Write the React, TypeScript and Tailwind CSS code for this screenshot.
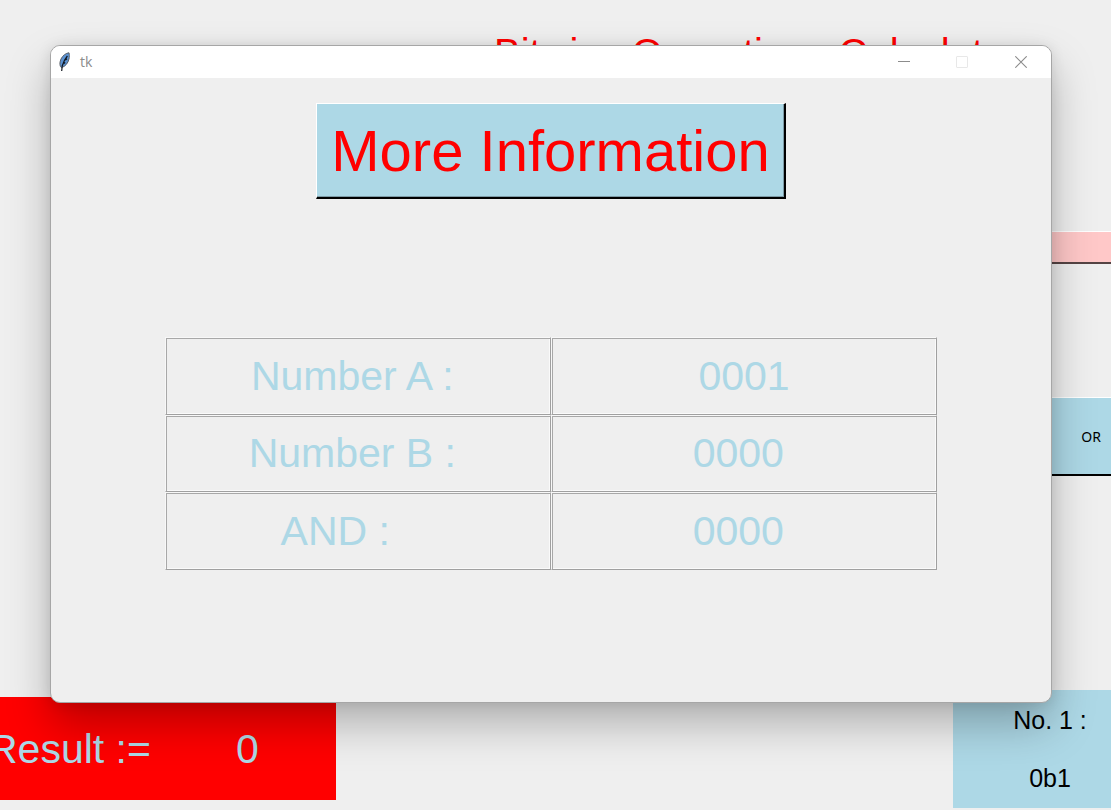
import React from "react";

const rows = [
  { label: "Number A : ", value: "0001" },
  { label: "Number B : ", value: "0000 " },
  { label: "AND :    ", value: "0000 " },
];

const cell =
  "w-1/2 whitespace-pre border border-t-[#f8f8f8] border-l-[#f8f8f8] border-r-[#a0a0a0] border-b-[#a0a0a0] p-0 text-center align-middle text-[41px] leading-[46px] font-normal text-[#add8e6] shadow-[inset_1px_1px_0_#a8a8a8,inset_-1px_-1px_0_#fafafa]";

function FeatherIcon() {
  return (
    <svg width="14" height="20" viewBox="0 0 14 20" aria-hidden="true">
      <path
        d="M11 0.8C8 1 4.6 3.6 3 7 1.8 9.8 1.6 12.4 2.4 14.4L3.4 15.6C7.4 14.6 10 11 11 7 11.4 4.8 11.5 2.6 11 0.8Z"
        fill="#5b92d2"
        stroke="#5a5f66"
        strokeWidth="1"
      />
      <path
        d="M9.4 4C7.2 6.6 5.4 10 4.2 14L3.7 19M9 6.8L7.4 8M7.2 10.6L5.8 11.6"
        fill="none"
        stroke="#10161e"
        strokeWidth="1.2"
      />
    </svg>
  );
}

function CalculatorPage() {
  return (
    <main className="flex min-h-screen flex-col">
      <h1 className="mt-[30px] ml-[494px] text-[40px] leading-[46px] whitespace-nowrap text-[#ff0000]">
        Bitwise Operations Calculator
      </h1>
      <input
        aria-label="Number"
        readOnly
        className="mt-[155px] h-[33px] w-40 self-end rounded-none border-t border-b-2 border-t-white border-b-[#554444] bg-[#ffc8c8]"
      />
      <button className="mt-[133px] h-[79px] w-40 self-end border-t border-b-2 border-t-white border-b-black bg-[#add8e6] pr-[10px] text-right font-['Noto_Sans',sans-serif] text-[14px] text-black">
        OR
      </button>
      <div className="mt-[214px] flex items-start justify-between">
        <section className="mt-[7px] flex h-[103px] w-[336px] items-center bg-[#ff0000] text-[41px] leading-[46px] whitespace-nowrap text-[#add8e6]">
          <span className="-ml-3 w-[248px]">Result :=</span>
          <output>0</output>
        </section>
        <section className="flex h-[118px] w-[158px] flex-col gap-[30px] bg-[#add8e6] pt-4 pl-[36px] text-center text-[25px] leading-[28px] whitespace-nowrap text-black">
          <p>No. 1 :</p>
          <p>0b1</p>
        </section>
      </div>
    </main>
  );
}

function InfoWindow() {
  return (
    <section
      aria-label="tk"
      className="absolute top-[45px] right-[59px] left-[50px] overflow-hidden rounded-[10px] border border-[#a6a6a6] bg-[#efefef] shadow-[0_22px_44px_rgba(0,0,0,0.26),0_1px_14px_rgba(0,0,0,0.1)]"
    >
      <header className="flex h-8 items-center bg-white pl-[7px] text-[#8c8c8c]">
        <FeatherIcon />
        <span className="ml-2 flex-1 font-['Open_Sans',sans-serif] text-[14px] leading-5">tk</span>
        <button aria-label="Minimize" className="flex h-full w-[58px] items-center justify-center">
          <svg width="12" height="12" viewBox="0 0 12 12">
            <path d="M0 5.5H12" stroke="#8c8c8c" />
          </svg>
        </button>
        <button aria-label="Maximize" disabled className="flex h-full w-[58px] items-center justify-center">
          <svg width="12" height="12" viewBox="0 0 12 12">
            <rect x="0.5" y="0.5" width="11" height="11" rx="0.5" fill="none" stroke="#e8e8e8" />
          </svg>
        </button>
        <button aria-label="Close" className="flex h-full w-[60px] items-center justify-center">
          <svg width="12" height="12" viewBox="0 0 12 12">
            <path d="M0.3 0.3L11.7 11.7M11.7 0.3L0.3 11.7" stroke="#8c8c8c" strokeWidth="1.1" />
          </svg>
        </button>
      </header>
      <div className="flex flex-col items-center pt-[25px] pb-[132px]">
        <button className="h-24 w-[470px] border border-t-white border-r-2 border-b-2 border-l-white border-r-black border-b-black bg-[#add8e6] text-[58px] leading-[66px] whitespace-nowrap text-[#ff0000] shadow-[inset_-1px_-1px_0_#7d9ba6]">
          More Information
        </button>
        <table className="mt-[138px] h-[233px] w-[772px] table-fixed border-separate border-spacing-0">
          <tbody>
            {rows.map((row) => (
              <tr key={row.label}>
                <th scope="row" className={cell}>
                  {row.label}
                </th>
                <td className={cell}>{row.value}</td>
              </tr>
            ))}
          </tbody>
        </table>
      </div>
    </section>
  );
}

export default function App() {
  return (
    <div className="relative min-h-screen overflow-hidden bg-[#efefef] font-['Liberation_Sans',Arial,sans-serif]">
      <CalculatorPage />
      <InfoWindow />
    </div>
  );
}
